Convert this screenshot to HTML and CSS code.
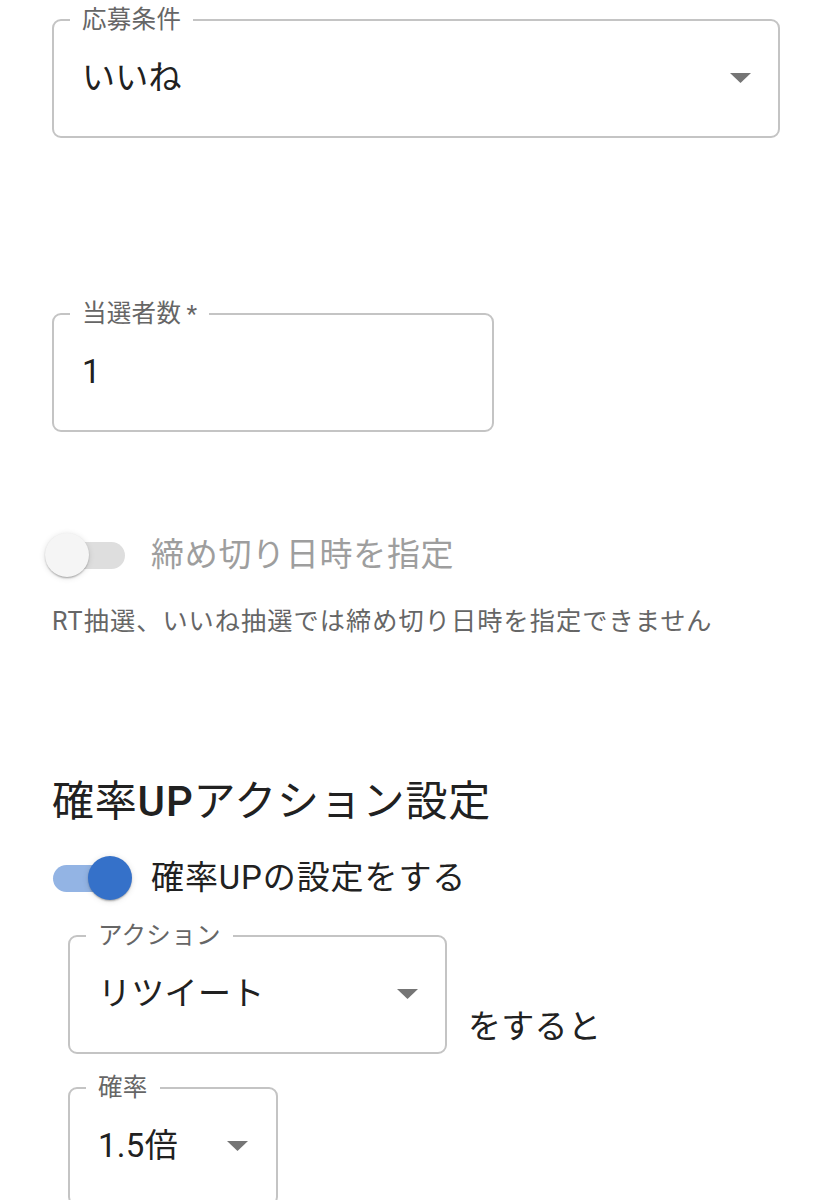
FILE: index.html
```html
<!DOCTYPE html>
<html lang="ja">
<head>
<meta charset="utf-8">
<title>設定</title>
<link rel="stylesheet" href="styles.css">
</head>
<body>
<main class="page">
  <fieldset class="field field-wide">
    <legend class="field-label">応募条件</legend>
    <div class="field-row">
      <span class="field-value">いいね</span>
      <svg class="arrow" viewBox="0 0 21 10" width="21" height="10"><path d="M0 0h21L10.5 10z"/></svg>
    </div>
  </fieldset>

  <fieldset class="field field-mid">
    <legend class="field-label">当選者数&thinsp;*</legend>
    <div class="field-row">
      <span class="field-value">1</span>
    </div>
  </fieldset>

  <div class="switch-row switch-row-deadline">
    <span class="switch">
      <span class="track track-off"><span class="thumb thumb-off"></span></span>
    </span>
    <span class="switch-label disabled">締め切り日時を指定</span>
  </div>
  <p class="helper">RT抽選、いいね抽選では締め切り日時を指定できません</p>

  <h2 class="heading">確率<span class="latin">UP</span>アクション設定</h2>

  <div class="switch-row switch-row-up">
    <span class="switch">
      <span class="track track-on"><span class="thumb thumb-on"></span></span>
    </span>
    <span class="switch-label">確率UPの設定をする</span>
  </div>

  <div class="action-row">
    <fieldset class="field field-action">
      <legend class="field-label">アクション</legend>
      <div class="field-row">
        <span class="field-value">リツイート</span>
        <svg class="arrow" viewBox="0 0 21 10" width="21" height="10"><path d="M0 0h21L10.5 10z"/></svg>
      </div>
    </fieldset>
    <span class="after-text">をすると</span>
  </div>

  <fieldset class="field field-rate">
    <legend class="field-label">確率</legend>
    <div class="field-row">
      <span class="field-value">1.5倍</span>
      <svg class="arrow" viewBox="0 0 21 10" width="21" height="10"><path d="M0 0h21L10.5 10z"/></svg>
    </div>
  </fieldset>
</main>
</body>
</html>
```

FILE: styles.css
```css
* { box-sizing: border-box; }

html, body {
  margin: 0;
  padding: 0;
  background: #ffffff;
}

body {
  font-family: Roboto, "Noto Sans CJK JP", sans-serif;
  color: #212121;
}

.page {
  padding: 8px 0 0 52px;
}

.field {
  margin: 0;
  padding: 0;
  border: 2px solid #c4c4c4;
  border-radius: 9px;
  min-width: 0;
}

.field-label {
  margin-left: 16px;
  padding: 0 12px;
  font-size: 24.5px;
  line-height: 24px;
  color: #666666;
  letter-spacing: 0.3px;
  white-space: nowrap;
}

.field-row {
  display: flex;
  align-items: center;
  justify-content: space-between;
  padding: 26px 27px 38px 28px;
}

.field-value {
  font-size: 33px;
  line-height: 40px;
  letter-spacing: 0.3px;
  color: #212121;
  white-space: nowrap;
}

.arrow {
  flex: none;
  fill: #757575;
}

.field-wide { width: 728px; }

.field-mid {
  width: 442px;
  margin-top: 164px;
}

.switch-row {
  display: flex;
  align-items: center;
  height: 44px;
}

.switch-row-deadline { margin-top: 101px; }
.switch-row-up { margin-top: 29px; }

.switch {
  display: flex;
  align-items: center;
  width: 73px;
  height: 44px;
  padding-left: 1px;
  flex: none;
}

.track {
  display: flex;
  align-items: center;
  width: 72px;
  height: 27px;
  border-radius: 14px;
}

.track-off { background: #dedede; }
.track-on { background: #93b4e4; }

.thumb {
  flex: none;
  width: 44px;
  height: 44px;
  border-radius: 50%;
}

.thumb-off {
  margin-left: -8px;
  background: #f5f5f5;
  box-shadow: 0 2px 2px -1px rgba(0,0,0,0.2), 0 1px 2px 0 rgba(0,0,0,0.14), 0 1px 6px 0 rgba(0,0,0,0.12);
}

.thumb-on {
  margin-left: 35px;
  background: #3571c9;
  box-shadow: 0 2px 2px -1px rgba(0,0,0,0.2), 0 1px 2px 0 rgba(0,0,0,0.14), 0 1px 6px 0 rgba(0,0,0,0.12);
}

.switch-label {
  margin-left: 26px;
  font-size: 33px;
  line-height: 40px;
  letter-spacing: 0.9px;
  color: #212121;
  white-space: nowrap;
}

.switch-label.disabled { color: #9e9e9e; letter-spacing: 0.7px; }

.helper {
  margin: 28px 0 0;
  font-size: 25.2px;
  line-height: 34px;
  letter-spacing: 1.05px;
  color: #666666;
  white-space: nowrap;
}

.heading {
  margin: 138px 0 0;
  font-size: 42px;
  line-height: 50px;
  font-weight: 400;
  letter-spacing: 0.8px;
  color: #212121;
  white-space: nowrap;
}

.heading .latin { font-weight: 500; }

.action-row {
  display: flex;
  align-items: flex-end;
  margin-top: 24px;
  padding-left: 16px;
}

.field-action { width: 379px; flex: none; }

.after-text {
  margin: 0 0 7px 21px;
  font-size: 33px;
  line-height: 40px;
  letter-spacing: 0.3px;
  color: #212121;
  white-space: nowrap;
}

.field-rate {
  width: 210px;
  margin: 22px 0 0 16px;
}

.field-rate .field-row { padding-right: 28px; }
```
